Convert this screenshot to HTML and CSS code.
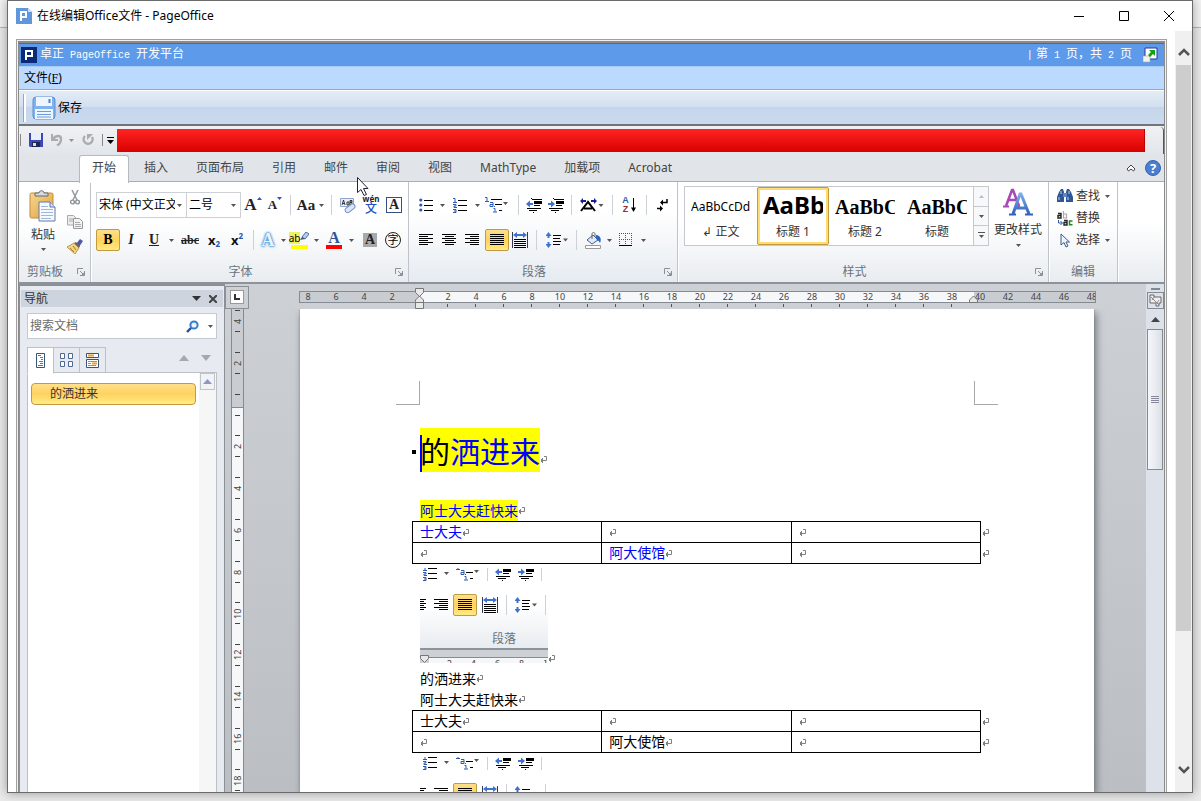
FILE: index.html
```html
<!DOCTYPE html>
<html lang="zh-CN">
<head>
<meta charset="utf-8">
<title>在线编辑Office文件 - PageOffice</title>
<link rel="stylesheet" href="styles.css">
</head>
<body>
<svg class="defs" aria-hidden="true">
  <defs>
    <linearGradient id="g-gold" x1="0" y1="0" x2="1" y2="1"><stop offset="0" stop-color="#f7d68c"/><stop offset="1" stop-color="#e0a040"/></linearGradient>
    <linearGradient id="g-blue" x1="0" y1="0" x2="0" y2="1"><stop offset="0" stop-color="#7fb0ec"/><stop offset="1" stop-color="#2f62b8"/></linearGradient>
  </defs>
  <symbol id="caret" viewBox="0 0 5 3"><path d="M0 0h5L2.500 3z" fill="#555"/></symbol>
  <symbol id="launcher" viewBox="0 0 8 8"><path d="M.5 6V.5H6" fill="none" stroke="#8a9099"/><path d="M3 3l3 3M7.500 3v4.500H3" fill="none" stroke="#8a9099"/><path d="M4 7.500h3.500V4z" fill="#8a9099"/></symbol>
  <symbol id="al-left" viewBox="0 0 14 12"><path d="M0 .5h14M0 2.500h9M0 4.500h14M0 6.500h9M0 8.500h14M0 10.500h9" stroke="#000"/></symbol>
  <symbol id="al-center" viewBox="0 0 14 12"><path d="M0 .5h14M3 2.500h9M0 4.500h14M3 6.500h9M0 8.500h14M3 10.500h9" stroke="#000"/></symbol>
  <symbol id="al-right" viewBox="0 0 14 12"><path d="M0 .5h14M5 2.500h9M0 4.500h14M5 6.500h9M0 8.500h14M5 10.500h9" stroke="#000"/></symbol>
  <symbol id="al-just" viewBox="0 0 14 12"><path d="M0 .5h14M0 2.500h14M0 4.500h14M0 6.500h14M0 8.500h14M0 10.500h14" stroke="#000"/></symbol>
  <symbol id="al-dist" viewBox="0 0 16 16"><path d="M.5 0v16M15.500 0v16" stroke="#333a55"/><path d="M1 3l4-3v2h6V0l4 3-4 3V4H5v2z" fill="#3d72cf"/><path d="M2 7.500h12M2 9.500h12M2 11.500h12M2 13.500h12M2 15.500h12" stroke="#000"/></symbol>
  <symbol id="bullets" viewBox="0 0 14 14"><g fill="#2c58b0"><circle cx="1.800" cy="2" r="1.600"/><circle cx="1.800" cy="7" r="1.600"/><circle cx="1.800" cy="12" r="1.600"/></g><path d="M5 2.500h9M5 7.500h9M5 12.500h9" stroke="#000"/></symbol>
  <symbol id="numbers" viewBox="0 0 14 15"><path d="M0 .5h2v4M0 4.500h4M0 6.500h3v1.500h-2v1.500h3M0 11.500h3v3H0M1 13h2" fill="none" stroke="#2c58b0"/><path d="M5 2.500h9M5 7.500h9M5 12.500h9" stroke="#000"/></symbol>
  <symbol id="multi" viewBox="0 0 24 16"><path d="M0 .5h2v4M0 4.500h4M5 5.500h3v4H5v-2h3M9.500 9v1M8.500 11.500h1.500v3M8 15h4" fill="none" stroke="#2c58b0"/><path d="M6 2.500h11M10 7.500h7M14 13.500h3" stroke="#000"/><path d="M18 5h5l-2.500 3z" fill="#555"/></symbol>
  <symbol id="outdent" viewBox="0 0 16 15"><path d="M6 1.500h10M8 7.500h6M1 10.500h14M3 12.500h8" stroke="#000"/><path d="M5.500 0v2M7.500 12v3" stroke="#000" stroke-dasharray="1 1"/><path d="M8 4.500h8" stroke="#000" stroke-width="3"/><path d="M0 6l4-3.500v2.500h3v2H4v2.500z" fill="#3d72cf"/></symbol>
  <symbol id="indent" viewBox="0 0 16 15"><path d="M6 1.500h10M8 7.500h6M1 10.500h14M3 12.500h8" stroke="#000"/><path d="M5.500 0v2M7.500 12v3" stroke="#000" stroke-dasharray="1 1"/><path d="M8 4.500h8" stroke="#000" stroke-width="3"/><path d="M7 6L3 2.500V5H0v2h3v2.500z" fill="#3d72cf"/></symbol>
  <symbol id="spacing" viewBox="0 0 22 16"><path d="M2.500 3v3M2.500 10v3" stroke="#3d72cf" stroke-width="2"/><path d="M2.500 0L5.500 4h-6zM2.500 16l3-4h-6z" fill="#3d72cf"/><path d="M7 3.500h8M7 6.500h7M7 9.500h8M7 12.500h7" stroke="#000"/><path d="M17 6.500h5l-2.500 3z" fill="#555"/></symbol>
  <symbol id="mark" viewBox="0 0 8 8"><path d="M4 .5h2.500v4H1M2.500 2v5M1.500 3v3" fill="none" stroke="#808080"/></symbol>
  <symbol id="chev" viewBox="0 0 12 8"><path d="M1 7l5-5 5 5" fill="none" stroke="#555" stroke-width="2.500"/></symbol>
</svg>

<div class="desktop">
<main class="window">
  <header class="titlebar">
    <svg class="app-icon" width="16" height="16" viewBox="0 0 16 16"><path d="M0 0h12l4 4v12H0z" fill="#5f97dd"/><path d="M12 0l4 4h-4z" fill="#cfe0f5"/><path d="M5 13V4h5v5H5" fill="none" stroke="#fff" stroke-width="2"/></svg>
    <h1>在线编辑Office文件 - PageOffice</h1>
    <button class="win-btn" aria-label="最小化"><svg width="10" height="10"><path d="M0 5.500h10" stroke="#000"/></svg></button>
    <button class="win-btn" aria-label="最大化"><svg width="10" height="10"><path d="M.5 .5h9v9h-9z" fill="none" stroke="#000"/></svg></button>
    <button class="win-btn" aria-label="关闭"><svg width="10" height="10"><path d="M0 0l10 10M10 0L0 10" stroke="#000"/></svg></button>
  </header>

  <div class="client">
  <div class="content">
  <div class="frame">
  <div class="office">
    <div class="po-title">
      <svg width="16" height="16" viewBox="0 0 16 16"><path d="M0 0h16v16H0z" fill="#0a2a78"/><path d="M5 13V4h6v5H5" fill="none" stroke="#fff" stroke-width="2"/></svg>
      <span class="po-name">卓正<span class="mono"> PageOffice </span>开发平台</span>
      <span class="po-pages"><span class="mono">|</span> 第<span class="mono"> 1 </span>页，共<span class="mono"> 2 </span>页</span>
      <button aria-label="全屏"><svg width="15" height="16" viewBox="0 0 15 16"><path d="M2 1h12v11H2z" fill="#fff" stroke="#26379b" stroke-width="1"/><path d="M0 9h7v6H0z" fill="#f4f2ec" stroke="#aaa" stroke-width=".6"/><path d="M6 3h6v6l-2-2-3 3-2-2 3-3z" fill="#0fa30f"/></svg></button>
    </div>
    <nav class="po-menu"><button>文件(<u class="mono">F</u>)</button></nav>
    <div class="po-toolbar">
      <button><svg width="24" height="24" viewBox="0 0 24 24"><rect x="1" y="1" width="22" height="22" rx="3" fill="#7fb2f0" stroke="#5b8fd4"/><path d="M4 1h16v9H4zM3 13h18v10H3z" fill="#eef5fe"/><rect x="16.500" y="3" width="2" height="4" fill="#4c7fc4"/><path d="M5 15.500h14M5 18.500h14M5 21h14" stroke="#6c9bdc"/></svg>保存</button>
    </div>

    <div class="qat">
      <i class="qsep"></i>
      <button aria-label="保存"><svg width="14" height="14" viewBox="0 0 14 14"><path d="M0 0h14v14H1L0 13z" fill="#3b49b8"/><path d="M2 0h10v7H2z" fill="#e8eefb"/><path d="M3 9h8v5H3z" fill="#20264f"/><path d="M4 10h3v3H4z" fill="#ddd"/></svg></button>
      <button aria-label="撤销"><svg width="12" height="12" viewBox="0 0 12 12"><path d="M1 0v6h6" fill="none" stroke="#a9adb3" stroke-width="2"/><path d="M2 5c3-4 8-4 8 0 0 3-1 5-4 6.500" fill="none" stroke="#a9adb3" stroke-width="2.400"/></svg></button>
      <svg class="c-grey" width="5" height="3"><use href="#caret"/></svg>
      <button aria-label="重复"><svg width="12" height="12" viewBox="0 0 12 12"><path d="M3 2a4.500 4.500 0 1 0 7 1" fill="none" stroke="#a9adb3" stroke-width="2.400"/><path d="M5 0v6l6-6z" fill="#a9adb3"/></svg></button>
      <i class="qsep"></i>
      <button aria-label="自定义快速访问工具栏"><svg width="7" height="7"><path d="M0 .5h7" stroke="#000"/><path d="M0 3h7L3.500 7z"/></svg></button>
      <div class="redbar"></div>
      <div class="qat-end"></div>
    </div>

    <div class="tabs">
      <button class="active">开始</button><button>插入</button><button>页面布局</button><button>引用</button><button>邮件</button><button>审阅</button><button>视图</button><button>MathType</button><button>加载项</button><button>Acrobat</button>
      <span class="grow"></span>
      <svg width="10" height="8" viewBox="0 0 10 8"><path d="M1 5l4-4 4 4-1.500 2L5 5 2.500 7z" fill="#fff" stroke="#444"/></svg>
      <button class="help" aria-label="帮助">?</button>
      <svg class="pointer" width="13" height="20" viewBox="0 0 13 20"><path d="M.5.5v15l3.500-3 3 6 2.500-1-3-6h4.500z" fill="#fff" stroke="#223"/></svg>
    </div>

    <div class="ribbon">
      <section class="group clipboard">
        <div class="clip-body">
          <button class="paste">
            <svg width="28" height="32" viewBox="0 0 28 32"><rect x="1" y="3" width="23" height="25" rx="1.500" fill="url(#g-gold)" stroke="#c08c3c"/><path d="M6 6V3h4c0-3 5-3 5 0h4v3z" fill="#d5dbe2" stroke="#5c6a7a"/><path d="M10 12h11l5 5v14H10z" fill="#f6f9fd" stroke="#5e7ba5"/><path d="M21 12v5h5" fill="#cfdcef" stroke="#5e7ba5"/><path d="M12 16.500h7M12 19.500h12M12 22.500h12M12 25.500h12M12 28.500h10" stroke="#9db8dc"/></svg>
            <span>粘贴</span><svg width="5" height="3"><use href="#caret"/></svg>
          </button>
          <div class="clip-side">
            <button aria-label="剪切"><svg width="10" height="15" viewBox="0 0 10 15"><path d="M2 0l5 10M8 0L3 10" stroke="#9a9ea4" stroke-width="1.600"/><circle cx="2.500" cy="12" r="1.900" fill="none" stroke="#8b8f96" stroke-width="1.400"/><circle cx="7.500" cy="12" r="1.900" fill="none" stroke="#8b8f96" stroke-width="1.400"/></svg></button>
            <button aria-label="复制"><svg width="16" height="14" viewBox="0 0 16 14"><path d="M.5.500h6l3 3V10H.5z" fill="#eee" stroke="#aaa"/><path d="M6.500 3.500h6l3 3v7h-9z" fill="#f3f3f3" stroke="#999"/><path d="M2 4h4M2 6h4M8 7.500h5M8 9.500h6M8 11.500h6" stroke="#aaa"/></svg></button>
            <button aria-label="格式刷"><svg width="16" height="15" viewBox="0 0 16 15"><path d="M9 5l4-5 3 2-4 6z" fill="#5157a8"/><path d="M0 8l7-4 5 5-4 6z" fill="#f2d27c" stroke="#b08a3a" stroke-width=".8"/><path d="M3 9l4 4M6 7l3 4" stroke="#a87c2c"/><path d="M7 4l5 5 1-2-4-4z" fill="#666"/></svg></button>
          </div>
        </div>
        <footer>剪贴板<svg class="la" width="8" height="8"><use href="#launcher"/></svg></footer>
      </section>

      <section class="group font">
        <div class="row font-1">
          <button class="combo"><span>宋体 (中文正文)</span><svg width="5" height="3"><use href="#caret"/></svg></button>
          <button class="combo"><span>二号</span><svg width="5" height="3"><use href="#caret"/></svg></button>
          <button class="serif big">A<svg width="5" height="3" viewBox="0 0 5 3"><path d="M0 3h5L2.500 0z" fill="#2c58b0"/></svg></button>
          <button class="serif small">A<svg width="5" height="3" viewBox="0 0 5 3"><path d="M0 0h5L2.500 3z" fill="#2c58b0"/></svg></button>
          <i class="sep"></i>
          <button class="serif mid">Aa</button><svg width="5" height="3"><use href="#caret"/></svg>
          <i class="sep"></i>
          <button aria-label="清除格式"><svg width="16" height="17" viewBox="0 0 16 17"><path d="M.5 1.500h13v8H.5z" fill="#eaf0fa" stroke="#8fa5cc"/><path d="M2 8l1.500-5L5 8M2.500 6.500h2M7 8V5h2v3H7M10 3.500h2V5h-2zM10 5.500h2V8h-2z" fill="none" stroke="#222" stroke-width=".9"/><rect x="5" y="9" width="11" height="5" rx="2.500" transform="rotate(-38 10 12)" fill="#dce6f8" stroke="#6f8fca"/></svg></button>
          <button class="wen" aria-label="拼音指南"><span>wén</span><b>文</b></button>
          <button class="serif boxed">A</button>
        </div>
        <div class="row font-2">
          <button class="serif on">B</button>
          <button class="serif ital">I</button>
          <button class="serif under">U</button><svg width="5" height="3"><use href="#caret"/></svg>
          <button class="serif strike">abc</button>
          <button class="sub">x<sub>2</sub></button>
          <button class="sub">x<sup>2</sup></button>
          <i class="sep"></i>
          <button class="serif glow">A</button><svg width="5" height="3"><use href="#caret"/></svg>
          <button class="hl" aria-label="突出显示"><span>ab</span><svg width="9" height="9" viewBox="0 0 9 9"><path d="M2 5l4-5 3 2-4 5z" fill="#b8cdf0" stroke="#4b6ca8"/><path d="M0 8l2-3 3 2z" fill="#555"/></svg></button><svg width="5" height="3"><use href="#caret"/></svg>
          <button class="serif fcolor">A</button><svg width="5" height="3"><use href="#caret"/></svg>
          <button class="serif shade">A</button>
          <button class="circled">字</button>
        </div>
        <footer>字体<svg class="la" width="8" height="8"><use href="#launcher"/></svg></footer>
      </section>

      <section class="group para">
        <div class="row para-1">
          <button aria-label="项目符号"><svg width="14" height="14"><use href="#bullets"/></svg></button><svg width="5" height="3"><use href="#caret"/></svg>
          <button aria-label="编号"><svg width="14" height="15"><use href="#numbers"/></svg></button><svg width="5" height="3"><use href="#caret"/></svg>
          <button aria-label="多级列表"><svg width="24" height="16"><use href="#multi"/></svg></button>
          <i class="sep"></i>
          <button aria-label="减少缩进量"><svg width="16" height="15"><use href="#outdent"/></svg></button>
          <button aria-label="增加缩进量"><svg width="16" height="15"><use href="#indent"/></svg></button>
          <i class="sep"></i>
          <button aria-label="中文版式"><svg width="24" height="14" viewBox="0 0 24 14"><path d="M1 13l7-9 7 9M4 10.500h8" fill="none" stroke="#000" stroke-width="2"/><path d="M0 3l3-3v2h3v2H3v2zM17 3l-3-3v2h-3v2h3v2z" fill="#1a1a9a"/><path d="M18.500 6h5L21 9z" fill="#555"/></svg></button>
          <i class="sep"></i>
          <button aria-label="排序" class="sort"><span><b>A</b><b>Z</b></span><svg width="5" height="14" viewBox="0 0 5 14"><path d="M2.500 0v12" stroke="#000"/><path d="M0 9.500h5L2.500 14z"/></svg></button>
          <i class="sep"></i>
          <button aria-label="显示编辑标记"><svg width="11" height="13" viewBox="0 0 11 13"><path d="M10 0v3.500H5" fill="none" stroke="#000" stroke-width="1.500"/><path d="M3 3.500l3-3v6zM6 9.500l-3-3v6z"/><path d="M0 9.500h4" stroke="#000" stroke-width="1.500"/></svg></button>
        </div>
        <div class="row para-2">
          <button aria-label="左对齐"><svg width="14" height="12"><use href="#al-left"/></svg></button>
          <button aria-label="居中"><svg width="14" height="12"><use href="#al-center"/></svg></button>
          <button aria-label="右对齐"><svg width="14" height="12"><use href="#al-right"/></svg></button>
          <button class="on" aria-label="两端对齐"><svg width="14" height="12"><use href="#al-just"/></svg></button>
          <button aria-label="分散对齐"><svg width="16" height="16"><use href="#al-dist"/></svg></button>
          <i class="sep"></i>
          <button aria-label="行距"><svg width="22" height="16"><use href="#spacing"/></svg></button>
          <i class="sep"></i>
          <button aria-label="底纹"><svg width="17" height="17" viewBox="0 0 17 17"><path d="M2 8l6-5 5 5-6 4z" fill="#dfe9f8" stroke="#48608c"/><path d="M7 7V2c0-2 3-2 3 0v3" fill="none" stroke="#666"/><path d="M11 3c4 0 6 4 4 8-1-2-2-3-4-4z" fill="#2c62c4"/><path d="M.5 13.500h15v3H.5z" fill="#fff" stroke="#999"/></svg></button><svg width="5" height="3"><use href="#caret"/></svg>
          <button aria-label="边框"><svg width="14" height="14" viewBox="0 0 14 14"><path d="M.5 0v13M12.500 0v13M6.500 0v13M0 .5h13M0 6.500h13" stroke="#555" stroke-dasharray="1 1"/><path d="M0 12.500h13" stroke="#000"/></svg></button><svg width="5" height="3"><use href="#caret"/></svg>
        </div>
        <footer>段落<svg class="la" width="8" height="8"><use href="#launcher"/></svg></footer>
      </section>

      <section class="group styles">
        <div class="styles-body">
          <div class="gallery">
            <button><span class="sample">AaBbCcDd</span><span>↲ 正文</span></button>
            <button class="sel"><span class="sample s-big">AaBb</span><span>标题 1</span></button>
            <button><span class="sample s-ser">AaBbC</span><span>标题 2</span></button>
            <button><span class="sample s-ser">AaBbC</span><span>标题</span></button>
            <div class="spin">
              <button disabled aria-label="上一行"><svg width="5" height="3" viewBox="0 0 5 3"><path d="M0 3h5L2.500 0z" fill="#bbb"/></svg></button>
              <button aria-label="下一行"><svg width="5" height="3"><use href="#caret"/></svg></button>
              <button aria-label="其他"><svg width="7" height="7"><path d="M0 .5h7" stroke="#555"/><path d="M1 3h5L3.500 6z" fill="#555"/></svg></button>
            </div>
          </div>
          <button class="change">
            <svg width="30" height="28" viewBox="0 0 30 28"><path d="M3 18L9 2h1l6 16M5 12h9" fill="none" stroke="#a64bb5" stroke-width="2.600"/><path d="M0 18.500h6M12 18.500h5" stroke="#a64bb5" stroke-width="2"/><path d="M10 26l7-20h1l8 20M13 20h10" fill="none" stroke="url(#g-blue)" stroke-width="3"/><path d="M6 26.500h7M22 26.500h8" stroke="#2f62b8" stroke-width="2"/></svg>
            <span>更改样式</span><svg width="5" height="3"><use href="#caret"/></svg>
          </button>
        </div>
        <footer>样式<svg class="la" width="8" height="8"><use href="#launcher"/></svg></footer>
      </section>

      <section class="group edit">
        <div class="edit-body">
          <button><svg width="16" height="14" viewBox="0 0 16 14"><path d="M2 3l2-3h2l1 3v10H0V8zM14 3l-2-3h-2L9 3v10h7V8z" fill="#2f5798"/><path d="M6 4h4v4H6z" fill="#5f86c2"/><path d="M2 8v3M11 8v3M4 2v3M12 2v3" stroke="#c5d6ef"/></svg>查找<svg width="5" height="3"><use href="#caret"/></svg></button>
          <button><svg width="16" height="15" viewBox="0 0 16 15"><path d="M1 2.500h3V7H1V4.500h3" fill="none" stroke="#222" stroke-width="1.400"/><path d="M6.500 0v7h3V3h-3" fill="none" stroke="#aaa" stroke-width="1.200"/><path d="M1.500 9v3H5M3.500 10l2 2-2 2" fill="none" stroke="#2c58b0"/><path d="M7 9.500h3V14H7v-2.500h3" fill="none" stroke="#222" stroke-width="1.400"/><path d="M15.500 10H12.500v3.800h3" fill="none" stroke="#178a2a" stroke-width="1.500"/></svg>替换</button>
          <button><svg width="16" height="15" viewBox="0 0 16 15"><path d="M4 1v11l3-2.500L9 14l2-1-2-4h3.500z" fill="#eef3fb" stroke="#3d5a8c"/></svg>选择<svg width="5" height="3"><use href="#caret"/></svg></button>
        </div>
        <footer>编辑</footer>
      </section>
    </div>

    <div class="work">
      <aside class="nav">
        <header><span>导航</span><button aria-label="选项"><svg width="9" height="5"><path d="M0 0h9L4.500 5z" fill="#333"/></svg></button><button aria-label="关闭"><svg width="8" height="8"><path d="M0 0l8 8M8 0L0 8" stroke="#444" stroke-width="2"/></svg></button></header>
        <label class="search"><input type="text" placeholder="搜索文档" aria-label="搜索文档"><svg width="13" height="13" viewBox="0 0 13 13"><circle cx="8" cy="5" r="3.600" fill="#eaf3ff" stroke="#2f7fd0" stroke-width="2"/><path d="M5 8l-4 4" stroke="#2a4a98" stroke-width="2.400"/></svg><svg width="5" height="3"><use href="#caret"/></svg></label>
        <div class="nav-tabs">
          <button class="cur" aria-label="浏览标题"><svg width="9" height="15"><path d="M.5.500h8v14h-8z" fill="#fff" stroke="#3a5578"/><path d="M2 2.500h3M4 4.500h3M5 6.500h2M3 8.500h4M4 10.500h3M2 12.500h5" stroke="#5c7899"/></svg></button>
          <button aria-label="浏览页面"><svg width="13" height="15"><path d="M.5.500h4v5h-4zM8.500.500h4v5h-4zM.5 8.500h4v5h-4zM8.500 8.500h4v5h-4z" fill="#fff" stroke="#4f6a92"/></svg></button>
          <button aria-label="浏览结果"><svg width="13" height="15"><path d="M.5.500h12v4H.5zM.5 6.500h12v8H.5z" fill="#fff" stroke="#3a5578"/><path d="M2 2.500h6M6 10.500h5" stroke="#f0a020" stroke-width="2"/><path d="M2 8.500h9M2 10.500h3M2 12.500h8" stroke="#7a93b3"/></svg></button>
          <span class="grow"></span>
          <svg width="10" height="6"><path d="M0 6h10L5 0z" fill="#a5a8ac"/></svg>
          <svg width="10" height="6"><path d="M0 0h10L5 6z" fill="#a5a8ac"/></svg>
        </div>
        <div class="nav-body">
          <div class="nav-list"><button>的洒进来</button></div>
          <div class="nav-scroll"><button aria-label="向上"><svg width="9" height="5"><path d="M0 5h9L4.500 0z" fill="#8c97c8"/></svg></button></div>
        </div>
      </aside>

      <div class="vruler">
        <div class="corner"><span><svg width="6" height="6"><path d="M1 0v5h5" fill="none" stroke="#333" stroke-width="2"/></svg></span></div>
        <ol><li>4</li><li>2</li><li></li><li>2</li><li>4</li><li>6</li><li>8</li><li>10</li><li>12</li><li>14</li><li>16</li><li>18</li></ol>
      </div>

      <div class="canvas">
        <div class="sheet">
          <div class="hruler">
            <ol><li>8</li><li>6</li><li>4</li><li>2</li><li></li><li>2</li><li>4</li><li>6</li><li>8</li><li>10</li><li>12</li><li>14</li><li>16</li><li>18</li><li>20</li><li>22</li><li>24</li><li>26</li><li>28</li><li>30</li><li>32</li><li>34</li><li>36</li><li>38</li><li>40</li><li>42</li><li>44</li><li>46</li><li>48</li></ol>
            <div class="ticks"></div>
            <svg class="m-left" width="9" height="21" viewBox="0 0 9 21"><path d="M.5.500h8v4l-4 4-4-4zM.5 13.500V12l4-4 4 4v2.500h-8zM.5 14.500h8v6h-8z" fill="#e8e8e8" stroke="#777"/></svg>
            <svg class="m-right" width="9" height="8" viewBox="0 0 9 8"><path d="M.5 7.500V5l4-4 4 4v2.500z" fill="#e8e8e8" stroke="#777"/></svg>
          </div>
          <article class="page">
            <div class="crops"><i></i><i></i></div>
            <div class="text">
              <h2><mark>的<span class="ins">洒进来</span></mark><svg width="8" height="8"><use href="#mark"/></svg></h2>
              <p><mark class="ins">阿士大夫赶快来</mark><svg width="8" height="8"><use href="#mark"/></svg></p>
              <table>
                <tr><td><span class="ins">士大夫</span><svg width="8" height="8"><use href="#mark"/></svg></td><td><svg width="8" height="8"><use href="#mark"/></svg></td><td><svg width="8" height="8"><use href="#mark"/></svg></td><td class="end"><svg width="8" height="8"><use href="#mark"/></svg></td></tr>
                <tr><td><svg width="8" height="8"><use href="#mark"/></svg></td><td><span class="ins">阿大使馆</span><svg width="8" height="8"><use href="#mark"/></svg></td><td><svg width="8" height="8"><use href="#mark"/></svg></td><td class="end"><svg width="8" height="8"><use href="#mark"/></svg></td></tr>
              </table>
              <div class="figure">
                <div class="shot">
                  <div class="shot-1"><svg width="14" height="15"><use href="#numbers"/></svg><svg width="5" height="12" viewBox="0 0 5 12"><path d="M0 3h5L2.500 6z" fill="#555"/></svg><svg width="24" height="16"><use href="#multi"/></svg><i class="sep"></i><svg width="16" height="15"><use href="#outdent"/></svg><svg width="16" height="15"><use href="#indent"/></svg><i class="sep"></i></div>
                  <div class="shot-2"><svg width="6" height="12" viewBox="8 0 6 12"><path d="M0 .5h14M3 2.500h9M0 4.500h14M3 6.500h9M0 8.500h14M3 10.500h9" stroke="#000"/></svg><svg width="14" height="12"><use href="#al-right"/></svg><span class="on"><svg width="14" height="12"><use href="#al-just"/></svg></span><svg width="16" height="16"><use href="#al-dist"/></svg><i class="sep"></i><svg width="22" height="16"><use href="#spacing"/></svg><i class="sep"></i></div>
                  <div class="shot-label">段落</div>
                  <div class="shot-ruler"><svg width="9" height="8"><path d="M.5.500h8v3l-4 4-4-4z" fill="#e8e8e8" stroke="#777"/></svg><div><span>2</span><span>4</span><span>6</span><span>8</span><span>1</span></div></div>
                </div><svg width="8" height="8"><use href="#mark"/></svg>
              </div>
              <p>的洒进来<svg width="8" height="8"><use href="#mark"/></svg></p>
              <p>阿士大夫赶快来<svg width="8" height="8"><use href="#mark"/></svg></p>
              <table>
                <tr><td>士大夫<svg width="8" height="8"><use href="#mark"/></svg></td><td><svg width="8" height="8"><use href="#mark"/></svg></td><td><svg width="8" height="8"><use href="#mark"/></svg></td><td class="end"><svg width="8" height="8"><use href="#mark"/></svg></td></tr>
                <tr><td><svg width="8" height="8"><use href="#mark"/></svg></td><td>阿大使馆<svg width="8" height="8"><use href="#mark"/></svg></td><td><svg width="8" height="8"><use href="#mark"/></svg></td><td class="end"><svg width="8" height="8"><use href="#mark"/></svg></td></tr>
              </table>
              <div class="figure">
                <div class="shot">
                  <div class="shot-1"><svg width="14" height="15"><use href="#numbers"/></svg><svg width="5" height="12" viewBox="0 0 5 12"><path d="M0 3h5L2.500 6z" fill="#555"/></svg><svg width="24" height="16"><use href="#multi"/></svg><i class="sep"></i><svg width="16" height="15"><use href="#outdent"/></svg><svg width="16" height="15"><use href="#indent"/></svg><i class="sep"></i></div>
                  <div class="shot-2"><svg width="6" height="12" viewBox="8 0 6 12"><path d="M0 .5h14M3 2.500h9M0 4.500h14M3 6.500h9M0 8.500h14M3 10.500h9" stroke="#000"/></svg><svg width="14" height="12"><use href="#al-right"/></svg><span class="on"><svg width="14" height="12"><use href="#al-just"/></svg></span><svg width="16" height="16"><use href="#al-dist"/></svg><i class="sep"></i><svg width="22" height="16"><use href="#spacing"/></svg><i class="sep"></i></div>
                </div>
              </div>
            </div>
          </article>
        </div>
      </div>

      <div class="dscroll">
        <i class="split"></i>
        <button class="rtoggle" aria-label="标尺"><svg width="13" height="13" viewBox="0 0 13 13"><path d="M1 1h4v2h7v6h-2v3H7V9H1z" fill="#f4eef2" stroke="#666"/><path d="M2 3l8 8M5 3l-2 3M10 6l-2 3" stroke="#888"/></svg></button>
        <button class="up" aria-label="向上"><svg width="9" height="5"><path d="M0 5h9L4.500 0z" fill="#444"/></svg></button>
        <div class="dthumb"><svg width="8" height="8"><path d="M0 .5h8M0 2.500h8M0 4.500h8M0 6.500h8" stroke="#889"/></svg></div>
      </div>
    </div>
  </div>
  </div>
  </div>

  <div class="pscroll">
    <button aria-label="向上滚动"><svg width="12" height="8"><use href="#chev"/></svg></button>
    <div class="ptrack"><div class="pthumb"></div></div>
    <button aria-label="向下滚动"><svg class="flip" width="12" height="8"><use href="#chev"/></svg></button>
  </div>
  </div>
</main>
</div>
</body>
</html>
```
FILE: styles.css
```css
* { box-sizing: border-box; }
body {
  margin: 0;
  background: linear-gradient(#f2f2f2 0 27px, #b4b4b4 27px 28px, #e9e9e9 28px);
  font: 12px/16px "Noto Sans", "Noto Sans CJK SC", sans-serif;
  color: #333;
}
.defs { position: absolute; width: 0; height: 0; }
svg { display: block; flex: none; }
button {
  display: flex; align-items: center; justify-content: center;
  padding: 0; border: 0; background: none; font: inherit; color: inherit; white-space: nowrap;
}
.grow { flex: 1; }
.mono { font-family: "Liberation Mono", monospace; font-size: 10px; white-space: pre; }

.desktop { display: flex; height: 100vh; padding: 0 8px 8px 7px; overflow: hidden; }
.window {
  flex: 1; min-width: 0; display: flex; flex-direction: column;
  border: 1px solid #6b6b6b; background: #fff; box-shadow: 0 0 10px rgba(0, 0, 0, .35);
}
.titlebar { display: flex; align-items: center; height: 30px; padding: 0 1px 0 8px; flex: none; }
.titlebar h1 { flex: 1; margin: 0 0 0 5px; font-size: 12px; font-weight: 400; color: #000; }
.win-btn { width: 45px; height: 29px; }

.client { flex: 1; display: flex; min-height: 0; }
.content { flex: 1; min-width: 0; display: flex; padding: 8px 8px 0; }
.frame { flex: 1; min-width: 0; display: flex; border: 1px solid #a0a0a0; border-bottom: 0; padding: 1px 1px 0; background: #f0f0f0; }
.office {
  flex: 1; min-width: 0; display: flex; flex-direction: column;
  border: 1px solid #8a8a8a; border-width: 2px 1px 0; background: #fff; overflow: hidden;
}

.po-title {
  display: flex; align-items: center; height: 23px; flex: none; padding: 0 6px 0 2px;
  border-top: 1px solid #3f6da8; background: #5d9ae9; color: #fff;
}
.po-name { flex: 1; margin-left: 3px; }
.po-pages { margin-right: 11px; }
.po-menu { display: flex; height: 24px; flex: none; padding-left: 5px; border-top: 1px solid #a8cbf7; border-bottom: 1px solid #9aa7b5; background: #bcd9ff; color: #000; }
.po-menu .mono { font-family: "Liberation Serif", serif; font-size: 12px; }
.po-toolbar {
  display: flex; align-items: center; height: 36px; flex: none; padding-left: 5px;
  border-top: 1px solid #fff; border-bottom: 2px solid #70757c;
  background: linear-gradient(#e3ecf6, #d2dfef 50%, #c5d6ec 50%, #cbdaee); color: #000;
}
.po-toolbar button { gap: 2px; height: 28px; padding-left: 6px; border-left: 2px solid #fff; box-shadow: -1px 0 #9aa7b8; }

.qat { display: flex; align-items: center; height: 28px; flex: none; background: linear-gradient(#f1f1f4, #e2e6ea); }
.qat .qsep { width: 1px; height: 12px; margin-left: 1px; background: #888; }
.qat button { margin-left: 8px; }
.qat .c-grey { margin: 0 0 0 6px; opacity: .6; }
.qat .qsep ~ .qsep { margin-left: 8px; }
.qat .qsep ~ .qsep + button { margin-left: 4px; }
.redbar { flex: 1; height: 23px; margin: 1px 0 0 3px; border-right: 1px solid #b00; background: linear-gradient(#ff2424, #d90000); }
.qat-end { width: 19px; height: 27px; border-radius: 0 4px 0 0; border-right: 1px solid #555; }

.tabs { position: relative; display: flex; align-items: center; height: 28px; flex: none; padding-left: 60px; border-bottom: 1px solid #a5adb5; background: #e1e5e9; }
.tabs button { height: 28px; padding: 0 14px; color: #444; }
.tabs .active { padding: 0 12px; border: 1px solid #b5bac1; border-bottom: 0; border-radius: 3px 3px 0 0; background: #fff; margin: 0 1px -2px 0; padding-bottom: 2px; }
.tabs .help { width: 16px; height: 16px; margin: 0 3px 0 9px; padding: 0; border-radius: 8px; background: #4a7fd0; border: 1px solid #3563ae; color: #fff; font-weight: 700; font-size: 13px; }
.pointer { position: absolute; left: 338px; top: 23px; z-index: 2; }

.ribbon { display: flex; height: 102px; flex: none; border-bottom: 2px solid #8d939a; background: linear-gradient(#fff 40%, #e8ecf0); }
.group { display: flex; flex-direction: column; height: 100px; padding: 10px 5px 0; border-right: 1px solid #bfc4ca; box-shadow: 1px 0 #fff; flex: none; }
.group footer { display: flex; align-items: center; justify-content: center; position: relative; margin-top: auto; height: 20px; padding-right: 18px; color: #6a7380; }
.la { position: absolute; right: 0; top: 6px; }
.sep { width: 1px; height: 20px; background: #cdd1d6; }
.row { display: grid; height: 26px; align-items: center; justify-items: center; justify-content: start; }
.row + .row { margin-top: 9px; }

.clipboard { width: 72px; padding-top: 4px; }
.clipboard footer { justify-content: flex-start; padding: 0 0 0 3px; }
.clip-body { display: flex; gap: 8px; padding-left: 5px; }
.paste { flex-direction: column; width: 28px; gap: 5px; }
.clip-side { display: flex; flex-direction: column; width: 20px; padding-top: 4px; gap: 10px; align-items: center; }

.font { width: 318px; }
.font-1 { grid-template-columns: 91px 54px 24px 20px 10px 22px 8px 12px 22px 24px 22px; }
.font-2 { grid-template-columns: 24px 22px 24px 11px 26px 22px 24px 8px 22px 8px 24px 10px 26px 9px 28px 18px; }
.combo { width: 100%; height: 26px; border: 1px solid #cdd1d6; padding: 0 4px 0 2px; color: #000; background: #fff; justify-content: space-between; }
.combo + .combo { border-left: 0; }
.combo span { overflow: hidden; margin-right: 2px; }
.serif { font-family: "Liberation Serif", serif; font-weight: 700; color: #222; font-size: 14px; }
.big { font-size: 17px; align-items: flex-start; }
.small { font-size: 13px; align-items: flex-start; }
.mid { font-size: 15px; }
.wen { flex-direction: column; color: #222; }
.wen span { font-size: 8px; line-height: 8px; font-weight: 700; }
.wen b { font-size: 12px; line-height: 12px; color: #2450c0; font-weight: 500; }
.boxed { width: 16px; height: 16px; border: 1px solid #34507c; font-size: 14px; }
.on { width: 24px; height: 22px; border: 1px solid #c29a3f; border-radius: 2px; background: linear-gradient(#fbdf8c, #ffd25c 50%, #ffe983); color: #000; }
.ital { font-style: italic; }
.under { text-decoration: underline; }
.strike { font-size: 12px; text-decoration: line-through; }
.sub { font-weight: 700; font-size: 13px; color: #111; }
.sub sub, .sub sup { font-size: 8px; line-height: 8px; color: #2c58b0; }
.sub sub { align-self: flex-end; }
.sub sup { align-self: flex-start; }
.glow { font-size: 18px; color: #e8f3fc; text-shadow: 0 0 2px #3f8fd8, 0 0 2px #3f8fd8, 0 0 3px #3f8fd8; }
.hl { width: 17px; height: 17px; border-bottom: 4px solid #ff0; color: #000; align-items: flex-start; }
.hl span { line-height: 12px; font-size: 10px; background: #f0f060; }
.fcolor { width: 16px; height: 17px; border-bottom: 4px solid #f00; color: #2f5496; font-size: 16px; line-height: 12px; }
.shade { width: 14px; height: 14px; background: #a9a9a9; font-size: 14px; }
.circled { width: 16px; height: 16px; border: 1px solid #222; border-radius: 8px; color: #000; font-size: 11px; }

.para { width: 269px; background: linear-gradient(#fff 30%, #e6ebf1); }
.para-1 { grid-template-columns: 24px 8px 28px 6px 34px 8px 24px 20px 10px 32px 8px 26px 8px 24px; }
.para-2 { grid-template-columns: 24px 22px 24px 26px 20px 12px 30px 8px 26px 6px 28px 6px; }
.sort { gap: 2px; }
.sort b { display: block; font: 700 9px/9px "Liberation Sans", sans-serif; color: #2c58b0; }
.sort b + b { color: #9c2b2b; }

.styles { width: 371px; padding: 4px 5px 0 6px; }
.styles-body { display: flex; gap: 4px; }
.gallery { display: flex; height: 60px; border: 1px solid #c5c9ce; background: #fff; }
.gallery > button { flex-direction: column; justify-content: flex-end; width: 72px; padding: 0 6px 5px; }
.gallery > .sel { border: 3px solid #ffdc70; outline: 1px solid #c29a3f; outline-offset: -1px; padding: 0 3px 2px; border-radius: 2px; }
.sample { display: block; width: 100%; overflow: hidden; text-align: left; height: 26px; line-height: 26px; margin-bottom: 4px; color: #000; }
.s-big { font-size: 24px; font-weight: 700; line-height: 22px; }
.s-ser { font-family: "Liberation Serif", serif; font-weight: 700; font-size: 20px; }
.spin { display: flex; flex-direction: column; width: 15px; border-left: 1px solid #c5c9ce; background: #f7f8f9; }
.spin button { flex: 1; }
.spin button + button { border-top: 1px solid #c5c9ce; }
.change { flex-direction: column; justify-content: flex-start; width: 50px; padding-top: 2px; gap: 4px; }
.change span { line-height: 20px; }

.edit { width: 69px; padding-top: 3px; }
.edit footer { padding-right: 0; }
.edit-body { display: flex; flex-direction: column; align-items: flex-start; padding-left: 3px; }
.edit-body button { height: 22px; gap: 3px; }
.edit-body button > svg + svg { margin-left: 2px; }

.work { flex: 1; display: flex; min-height: 0; background: linear-gradient(#cdd1d6, #bbbfc4); }
.nav { display: flex; flex-direction: column; width: 206px; padding: 4px 7px 0 3px; flex: none; border: 1px solid #8b9097; border-width: 2px 1px 0; background: #e7ebf1; }
.nav header { display: flex; align-items: center; gap: 8px; height: 17px; margin: 0 -6px 0 -2px; padding: 0 6px 0 3px; background: #cdd4de; flex: none; }
.nav header span { flex: 1; }
.search { display: flex; align-items: center; gap: 9px; height: 26px; margin: 6px 0 8px 4px; padding-right: 3px; border: 1px solid #c5cad0; background: #fff; flex: none; }
.search input { flex: 1; min-width: 0; width: 0; height: 22px; padding: 0 2px 2px; border: 0; font: inherit; background: none; outline: 0; }
.search input::placeholder { color: #6b6b6b; opacity: 1; }
.nav-tabs { display: flex; height: 26px; margin-left: 4px; gap: 0; flex: none; }
.nav-tabs button { width: 26px; border: 1px solid #bcc1c8; border-left: 0; }
.nav-tabs .cur { width: 27px; border-left: 1px solid #bcc1c8; border-bottom-color: #fff; background: #fff; z-index: 1; margin-bottom: -1px; }
.nav-tabs > svg { margin: 8px 6px 0; }
.nav-body { flex: 1; display: flex; margin: -1px 0 0 4px; border: 1px solid #bcc1c8; border-bottom: 0; background: #fff; }
.nav-list { flex: 1; padding: 10px 3px; }
.nav-list button { width: 100%; height: 22px; justify-content: flex-start; padding-left: 18px; border: 1px solid #c29a3f; border-radius: 4px; background: linear-gradient(#ffe08a, #ffd261 50%, #ffec86); }
.nav-scroll { width: 17px; background: #f6f6f7; }
.nav-scroll button { width: 15px; height: 17px; margin: 0 1px; border: 1px solid #c0c4ca; background: #f1f3f6; }

.vruler { width: 24px; display: flex; flex-direction: column; align-items: center; flex: none; overflow: hidden; }
.corner { width: 24px; height: 23px; margin-top: 2px; padding: 3px 4px; border: 1px solid #8b9097; flex: none; }
.corner span { display: grid; place-items: center; width: 14px; height: 14px; border: 1px solid #999; background: #fff; }
.vruler ol {
  width: 13px; flex: 1; min-height: 0; margin: 0; padding: 0; list-style: none; overflow: hidden;
  border: 1px solid #858b92; border-width: 0 1px; font-size: 9px; color: #444;
  background: linear-gradient(#c9cdd2 0 98px, #858b92 98px 99px, #f6f7f8 99px);
}
.vruler li {
  width: 11px; height: 42px; display: flex; align-items: center; justify-content: center; writing-mode: vertical-rl; line-height: 11px;
  transform: rotate(180deg);
  background: linear-gradient(transparent 10px, #444 10px 11px, transparent 11px 31px, #444 31px 32px, transparent 32px) center / 5px 100% no-repeat;
}
.vruler li:nth-child(4n) { height: 41px; }
.vruler li:first-child { margin-top: -9px; }

.canvas { flex: 1; min-width: 0; overflow: hidden; }
.sheet { width: 797px; height: 100%; margin: 0 auto; display: flex; flex-direction: column; }
.hruler { position: relative; height: 25px; padding-top: 7px; flex: none; }
.hruler ol {
  display: flex; height: 12px; margin: 0; padding: 0; list-style: none; overflow: hidden;
  border: 1px solid #858b92; font-size: 9px; line-height: 10px; color: #444;
  background: linear-gradient(to right, #c9cdd2 0 120px, #f6f7f8 120px 674px, #c9cdd2 674px);
}
.hruler li { width: 28px; flex: none; text-align: center; }
.hruler li:first-child { margin-left: -6px; }
.ticks { height: 3px; margin: 1px 128px 0 148px; background: repeating-linear-gradient(to right, #555 0 1px, transparent 1px 28px); }
.m-left { position: absolute; left: 116px; top: 4px; }
.m-right { position: absolute; left: 670px; top: 11px; }
.page { flex: 1; min-height: 0; overflow: hidden; margin: 0 2px 0 1px; padding: 72px 96px 0; background: #fff; box-shadow: 2px 4px 8px #6d7278, 0 0 2px #8a9097; clip-path: inset(0 -12px 0 -12px); color: #000; }
.crops { display: flex; justify-content: space-between; }
.crops i { width: 24px; height: 24px; border: solid #a8a8a8; border-width: 0 1px 1px 0; }
.crops i + i { border-width: 0 0 1px 1px; }

.text { padding: 23px 24px 0; font: 14px/21px "Noto Sans CJK SC", sans-serif; }
.text svg { display: inline-block; }
.text mark { background: #ff0; color: inherit; }
.text .ins { color: #00f; }
.text h2 { display: flex; align-items: flex-end; margin: 0 0 28px -8px; font-size: 30px; line-height: 44px; font-weight: 400; }
.text h2::before { content: ""; width: 4px; height: 4px; margin: 0 4px 18px 0; background: #000; }
.text h2 mark { height: 44px; background: linear-gradient(#00f, #00f) left bottom / 2px 37px no-repeat #ff0; }
.text h2 svg { margin-bottom: 8px; }
.text p { display: flex; align-items: center; margin: 0; height: 21px; }
.text table { width: 578px; table-layout: fixed; margin-left: -8px; border-collapse: collapse; }
.text td { width: 189px; height: 21px; padding: 0 0 2px 7px; border: 1px solid #000; line-height: 18px; }
.text .end { width: 9px; padding: 0 0 2px 1px; border: 0; }
.figure { display: flex; align-items: flex-end; height: 104px; padding-bottom: 5px; }
.shot { width: 128px; height: 99px; overflow: hidden; background: linear-gradient(#fff 40px, #e8ecf0 84px); }
.shot-1, .shot-2 { display: flex; align-items: center; }
.shot-1 { height: 13px; margin-top: 4px; align-items: flex-end; overflow: hidden; gap: 7px; padding-left: 3px; }
.shot-1 .sep { height: 13px; }
.shot-2 { height: 24px; margin-top: 12px; gap: 8px; }
.shot-2 .on { display: grid; place-items: center; height: 22px; margin: 0 -3px; flex: none; }
.shot-label { margin: 11px 0 0 72px; height: 20px; font-size: 12px; line-height: 20px; color: #6a7380; }
.shot-ruler { display: flex; align-items: flex-start; height: 15px; padding-top: 5px; border-top: 2px solid #8d939a; background: #cdd1d6; overflow: hidden; }
.shot-ruler div { flex: 1; display: flex; justify-content: space-between; height: 12px; padding-left: 18px; border-top: 1px solid #858b92; margin-top: 2px; background: #f6f7f8; font-size: 9px; line-height: 12px; color: #444; }

.dscroll { display: flex; flex-direction: column; align-items: center; width: 18px; padding-top: 4px; flex: none; background: #dde2ea; }
.split { width: 9px; height: 2px; background: #808890; }
.rtoggle { width: 17px; height: 17px; margin-top: 2px; border: 1px solid #858b92; }
.up { height: 20px; }
.dthumb { display: grid; place-items: center; width: 16px; height: 28%; border: 1px solid #858b92; background: linear-gradient(to right, #f5f7f9, #dce0e7); }

.pscroll { display: flex; flex-direction: column; width: 17px; flex: none; background: #f0f0f0; }
.pscroll button { height: 45px; }
.pscroll button:first-child { height: 34px; padding-top: 8px; }
.ptrack { flex: 1; padding: 0 1px; }
.pthumb { height: 83%; background: #cdcdcd; }
.flip { transform: rotate(180deg); }
```
